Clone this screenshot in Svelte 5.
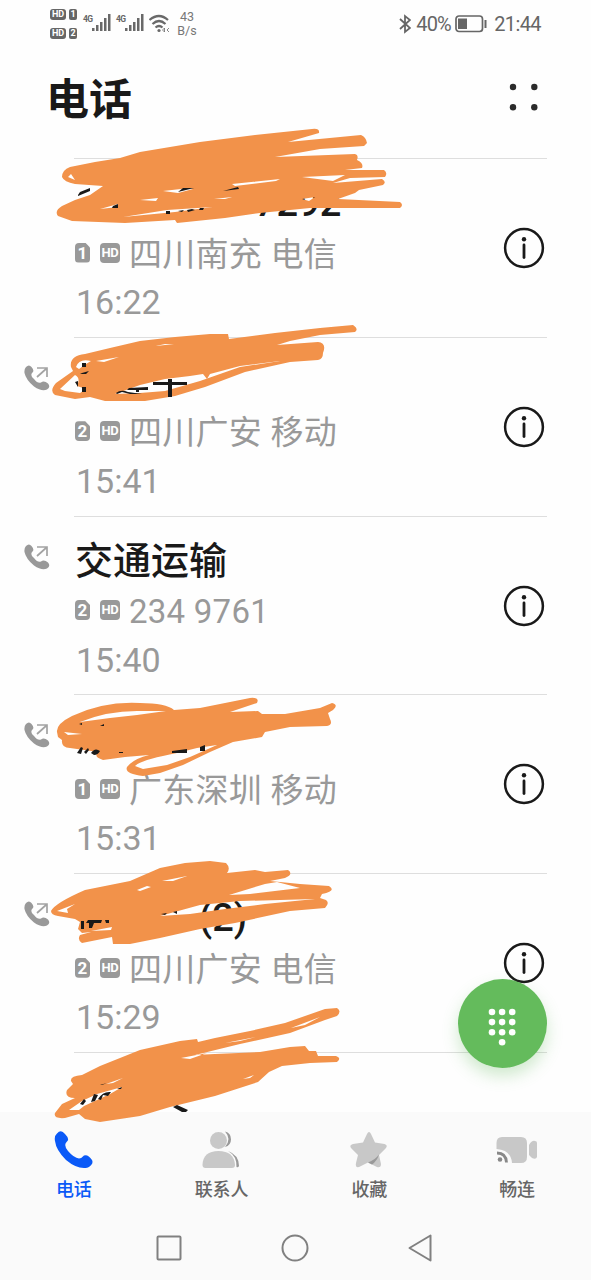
<script>
  const calls = [
    { name: '7292', indent: 180, sim: 1, place: '四川南充 电信', time: '16:22', out: false },
    { name: '', indent: 0, sim: 2, place: '四川广安 移动', time: '15:41', out: true },
    { name: '交通运输', indent: 0, sim: 2, place: '234 9761', time: '15:40', out: true },
    { name: '', indent: 0, sim: 1, place: '广东深圳 移动', time: '15:31', out: true },
    { name: '(2)', indent: 124, sim: 2, place: '四川广安 电信', time: '15:29', out: true }
  ];
  const tabs = [
    { id: 'phone', label: '电话' },
    { id: 'people', label: '联系人' },
    { id: 'star', label: '收藏' },
    { id: 'video', label: '畅连' }
  ];
  const keys = [0, 1, 2, 3, 4, 5, 6, 7, 8, 10];

  // Marker strokes laid over the list, in page coordinates; inner subpaths are gaps.
  const marks = [
    'M62 177Q62 170 70 167L95 162L120 158L140 152L200 142L255 135L312 129Q320 128 319 133L288 142L361 135Q366 137 367 143L364 146L320 149L275 157L355 154Q359 155 357 160Q364 163 362 168L345 170L384 170Q388 173 385 177L350 178L333 183L382 179Q387 182 383 185L359 190L355 193L338 199L400 202Q404 205 400 208L310 208L260 213L225 218L177 223L175 220L125 223L72 221L58 216Q54 211 62 206L75 200L90 195L103 186L75 184Q64 182 62 177Z M68 177L71 174L75 180Z M123 217L167 210L213 207L175 212Z M100 209L118 204L118 207Z M140 200L158 198L156 201Z M163 191L190 188L193 189L178 193Z M232 184L280 179L276 181L235 186Z M302 177L345 175L333 181Z M214 199L232 197L225 199Z M302 199L315 197L309 201Z',
    'M71 367Q69 356 85 354L110 348L140 341L175 337L210 334L228 334L229 339L275 333L320 328L353 325Q359 329 355 332L320 335L290 341L277 345L318 342Q327 343 323 353Q323 359 318 360L290 362L245 372L205 387L175 396L145 401L105 401L90 397L75 399L55 395Q49 391 56 383L73 371Z M60 389L75 375Q81 378 77 386L86 389L80 393L65 391Z M76 367Q79 358 91 361L86 364L79 369Z M96 361L119 357L104 362Z M156 346L174 344L165 344Z M115 394L140 385L165 379L190 376L203 374L207 379L210 374L240 366L280 361L240 367L200 381L165 391L140 393Z',
    'M57 732Q56 724 72 716Q104 701 140 703Q166 703 174 710L200 708L250 698Q260 697 257 703L230 712L258 711L262 714L285 714L320 708L332 703Q339 705 333 710L328 713L330 719Q333 725 327 726L290 727L265 732L262 737L233 742L210 752L183 765L160 773L143 776Q124 774 127 767Q133 759 149 755L125 757L103 760Q93 757 98 752L70 748Q61 748 62 740L58 737Z M80 722Q107 711 137 711L166 711L137 715L110 718Z M64 732L82 734L68 735Z M135 766Q140 760 177 753L197 748L217 745L190 757L167 765L143 769Z',
    'M51 911Q55 903 85 890L130 881L160 868L185 863L210 861L226 863Q231 868 227 873L255 870L265 872L288 870Q294 874 285 878L270 881L300 884L329 886Q337 891 322 894L320 898L326 900Q330 903 325 908L290 911L235 923L200 929L160 938L130 944L113 944L112 937L82 943Q77 940 80 935L91 932L82 933L78 929L80 922L75 919L58 916Q51 915 51 911Z M57 911L75 904L67 909L68 913Z M229 895L265 884L277 882L300 888L250 894Z M137 890L147 886L151 887L140 891Z M162 881L187 876L173 881Z M160 916L200 905L240 901L315 899L265 904L225 909L190 914Z M91 931L112 927L111 930Z',
    'M71 1081Q70 1076 82 1075L100 1066L140 1050L180 1041L197 1039L198 1042L215 1038L250 1031L285 1023L325 1009L337 1008Q342 1011 337 1016L325 1020L290 1033L240 1044L195 1055L215 1054L260 1052L290 1047L305 1046L309 1051L316 1051L318 1056L336 1056Q342 1058 337 1062L310 1063L282 1066L269 1072L258 1082L215 1096L170 1107L140 1116L100 1122L85 1119L79 1114L65 1118Q53 1119 55 1113L62 1104L75 1098Q64 1098 67 1090L73 1084Z M69 1110L82 1101L97 1094L122 1087L110 1094L84 1106L79 1110Z M106 1084L123 1078L113 1083Z M181 1058L207 1053L190 1059Z M225 1043L256 1037L240 1041Z M291 1028L320 1017L305 1025Z M243 1079L254 1075L250 1078Z'
  ];
  const traces =
    'M78 195L80 192L90 188L90 191L78 196Z M178 192L183 188L194 188Z M223 191L238 187L239 189Z M113 206L118 204L118 208L112 208Z M166 211h4v3h-4Z M178 211l6-1l-2 2Z M187 210l5-1l3 1l-7 2Z M200 208h4l-1 2h-4Z M82 363h4v4h-4Z M82 387h4v5h-4Z M82 373l7-2l-3 3h-6Z M75 382l3-1v6Z M153 382h34v3h-34Z M168 379h4v18h-4Z M129 388l19-1v3h-9v2h-3v-2h-9Z M116 393q5-4 12-1l14 2h-12l-8-2l-5 2Z M77 753l4-6l2 1l-2 6Z M84 752l4-4l1 2l-3 4Z M91 753q4-6 9-2q-2 4-6 4Z M172 751l15-2v4h-15Z M200 747l5-2v6h-5Z M119 752h4v1h-4Z M79 724l3-1v2Z M100 726l4-2v2Z M81 921h3v8h-3Z M88 920h14l-1 3h-7l-2 5h-3v-5h-3Z M105 920h4v3h-3Z M161 914l6-1l-2 2Z M173 912l4-1v3Z M80 1104l4-5l2 2l-3 4Z M91 1102l3-8l4 1l-3 6Z M98 1099q5-8 13-7l-3 4l-5-1l-2 5Z M117 1089l5-2l-1 2Z M100 1085l7-2l-5 2Z M173 1107l4-2l11 5l-2 2h-4Z';
</script>

{#snippet bars()}
  <svg class="bars" width="19" height="18" viewBox="0 0 19 18"><path d="M0 14h2.500v3H0zM4 11h2.500v6H4zM8 8h2.500v9H8zM12 4h2.500v13h-2.500zM16 0h2.500v17h-2.500z" fill="#696969" /></svg>
{/snippet}

<main>
  <header class="status">
    <div class="badges">
      {#each [1, 2] as n}
        <div><b class="hd">HD</b><b class="slot">{n}</b></div>
      {/each}
    </div>
    <div class="cell"><span>4G</span>{@render bars()}</div>
    <div class="cell"><span>4G</span>{@render bars()}</div>
    <svg class="wifi" width="24" height="20" viewBox="0 0 24 20" fill="none" stroke="#696969" stroke-width="2.200">
      <path d="M.500 6Q10-2 19 6M3.500 10Q10 4 16.500 10M6.500 13.500Q10 10.500 13.500 13.500" /><circle cx="10" cy="16.500" r="1.600" fill="#696969" stroke="none" /><path d="M13.500 16l2-2v4zM20 14l-2 2l2 2" stroke-width=".8" />
    </svg>
    <div class="rate"><span>43</span><span>B/s</span></div>
    <div class="right">
      <svg width="12" height="20" viewBox="0 0 12 20" fill="none" stroke="#666" stroke-width="1.800"><path d="M1 5l10 9l-5 4V2l5 4L1 15" /></svg>
      <span class="pct">40%</span>
      <svg width="34" height="18" viewBox="0 0 34 18"><rect x="1" y="1" width="26.500" height="15.500" rx="3" fill="none" stroke="#666" stroke-width="1.700" /><path d="M3 3.500h9v10.500h-9z" fill="#666" /><path d="M30.500 5v8" stroke="#666" stroke-width="2" /></svg>
      <span class="clock">21:44</span>
    </div>
  </header>

  <div class="title">
    <h1>电话</h1>
    <svg width="30" height="28" viewBox="0 0 30 28" fill="#2b2b2b"><circle cx="4" cy="4" r="3.200" /><circle cx="25.300" cy="4" r="3.200" /><circle cx="4" cy="24.300" r="3.200" /><circle cx="25.300" cy="24.300" r="3.200" /></svg>
  </div>

  <section class="list">
    {#each calls as c}
      <article>
        <div class="dir">
          {#if c.out}
            <svg width="26" height="26" viewBox="0 0 26 26">
              <path d="M2 2Q5-1 7.500 2Q11 6 8 8Q6 11 10 14Q14 19 17 17.500Q20 15 24 18.500Q27 22 23 24.500Q18 27 10 21.500Q2 15 .500 8Q0 4 2 2Z" fill="#999" />
              <path d="M13 3h10v9M22.500 3.500L13 12" fill="none" stroke="#a3a3a3" stroke-width="1.700" />
            </svg>
          {/if}
        </div>
        <div class="entry">
          <div class="body">
            <div class="name" style:padding-left="{c.indent}px">{c.name}</div>
            <div class="sub"><b class="sim">{c.sim}</b><b class="tag">HD</b><span>{c.place}</span></div>
            <div class="time">{c.time}</div>
          </div>
          <svg class="info" width="42" height="42" viewBox="0 0 42 42"><circle cx="21" cy="21" r="18.900" fill="none" stroke="#191919" stroke-width="2.500" /><circle cx="21" cy="12.200" r="2.200" fill="#191919" /><path d="M21 18v12.500" stroke="#191919" stroke-width="2.800" stroke-linecap="round" /></svg>
        </div>
      </article>
    {/each}
    <div class="rule"></div>
  </section>

  <footer>
    <nav class="tabs">
      {#each tabs as t, i}
        <div class="tab" class:active={i === 0}>
          <svg width="44" height="40" viewBox="0 0 44 40">
            {#if t.id === 'phone'}
              <path d="M5 3.500Q9-1 13 4Q18 9 15 11.500Q11 15 16 21Q22 28 27 28.500Q30 28 32 25.500Q36 24 40 30Q42 34 36 37.500Q26 40 14 30Q4 20 3 11Q2 6 5 3.500Z" fill="#0a59f7" />
            {:else if t.id === 'people'}
              <path d="M25 1.500A8 8 0 0 1 25 17Q32 9 25 1.500ZM28 21Q39 25 39 36Q38 38 36.500 37Q37 26 28 21Z" fill="#999" />
              <circle cx="18.500" cy="10.500" r="8.500" fill="#c8c8c8" /><path d="M2.500 35Q3 21 18.500 21Q34 21 35 35Q35 38 32 38H5.500Q2.500 38 2.500 35Z" fill="#c8c8c8" />
            {:else if t.id === 'star'}
              <path d="M20 4Q22 0 24 4L28 12.500L37.500 14Q41 15 39 18L32 25L34 34Q34 38 30 37L21 32.500L12 37Q8 38 9 33L11 25L4 18Q2 15 6 14L16 12.500Z" fill="#c8c8c8" /><path d="M32 24.500Q28 30 21 32.500L25 34.500Q30 31 32 24.500Z" fill="#999" />
            {:else}
              <path d="M7 7H26Q32 7 32 13V27Q32 33 26 33H17Q16 20 1.500 19V13Q1.500 7 7 7ZM34 15Q37 10 40 11Q42 11 42 13V27Q41 30 37 28L34 25Z" fill="#c8c8c8" />
              <circle cx="5" cy="29.500" r="2.300" fill="#888" /><path d="M2 23Q11 23 11.500 32.500" fill="none" stroke="#888" stroke-width="2.800" />
            {/if}
          </svg>
          <span>{t.label}</span>
        </div>
      {/each}
    </nav>
    <div class="system">
      <svg width="28" height="28" viewBox="0 0 28 28"><rect x="2.500" y="2.500" width="23" height="23" rx="1" /></svg>
      <svg width="28" height="28" viewBox="0 0 28 28"><circle cx="14" cy="14" r="12.500" /></svg>
      <svg width="28" height="28" viewBox="0 0 28 28"><path d="M2.500 14L23.500 1.500V26.500Z" stroke-linejoin="round" /></svg>
    </div>
  </footer>

  <svg class="marker" width="591" height="1280" viewBox="0 0 591 1280">
    {#each marks as d}
      <path {d} fill="#f2924a" fill-rule="evenodd" />
    {/each}
    <path d={traces} fill="#191919" />
  </svg>

  <button class="dial" aria-label="拨号">
    <svg width="30" height="40" viewBox="0 0 30 40" fill="#fff">
      {#each keys as k}<circle cx={5 + (k % 3) * 10.1} cy={5 + Math.floor(k / 3) * 10.1} r="3.300" />{/each}
    </svg>
  </button>
</main>

<style>
  :global(body) { margin: 0; background: #fff; }
  main { position: relative; width: 591px; height: 1280px; overflow: hidden; display: flex; flex-direction: column; background: #fefefe; font-family: Roboto, "Noto Sans CJK SC", sans-serif; color: #191919; }
  svg { display: block; flex: none; }
  .status { height: 48px; flex: none; display: flex; align-items: center; padding: 0 50px; box-sizing: border-box; color: #666; }
  .badges { display: flex; flex-direction: column; gap: 8px; width: 33px; flex: none; }
  .badges div { display: flex; gap: 3px; }
  b { background: #666; color: #fff; text-align: center; flex: none; }
  .hd { width: 16px; height: 11px; font-size: 9px; line-height: 11px; border-radius: 3px; }
  .slot { width: 8px; height: 11px; font-size: 9px; line-height: 11px; border-radius: 2px; }
  .cell { width: 33px; height: 20px; display: flex; flex: none; }
  .cell span { width: 9px; font-size: 8.500px; line-height: 10px; font-weight: 700; letter-spacing: -.6px; }
  .rate { margin-left: 2px; display: flex; flex-direction: column; align-items: center; width: 24px; font-size: 12.500px; line-height: 14.500px; color: #777; flex: none; }
  .right { margin-left: auto; display: flex; align-items: center; font-size: 20px; line-height: 24px; }
  .pct { margin-left: 5px; width: 39px; letter-spacing: -.8px; }
  .clock { margin-left: 5px; letter-spacing: -.6px; }
  .title { height: 110px; flex: none; box-sizing: border-box; padding: 0 52px 12px 46px; display: flex; align-items: center; justify-content: space-between; }
  h1 { margin: 6px 0 0; font-size: 43px; line-height: 60px; font-weight: 700; }
  .list { height: 954px; flex: none; overflow: hidden; }
  article { height: 178.800px; display: flex; }
  .dir { width: 49px; padding: 28px 0 0 24px; box-sizing: border-box; flex: none; }
  .entry { margin-left: 25px; width: 473px; border-top: 1px solid #dedede; box-sizing: border-box; display: flex; justify-content: space-between; }
  .body { padding: 19px 0 0 1px; }
  .name { height: 50px; line-height: 50px; font-size: 38px; font-weight: 500; box-sizing: border-box; white-space: nowrap; }
  .sub { height: 50px; display: flex; align-items: center; font-size: 33px; line-height: 50px; color: #999; white-space: nowrap; }
  .sub b { height: 20px; background: #999; border-radius: 4px; margin-top: -1px; }
  .sim { width: 15px; font-size: 17px; line-height: 20px; clip-path: polygon(0 0, 68% 0, 100% 25%, 100% 100%, 0 100%); }
  .sub .tag { width: 20px; margin-left: 10px; font-size: 13px; line-height: 20px; letter-spacing: -.4px; }
  .sub span { margin: 3px 0 0 9px; letter-spacing: .25px; }
  .time { height: 47px; line-height: 49px; padding-left: 1px; font-size: 34px; color: #999; }
  .info { margin: 68px 2px 0 0; }
  .rule { margin-left: 74px; width: 473px; height: 1px; background: #dedede; }
  footer { height: 168px; flex: none; background: #fafafa; }
  .tabs { display: grid; grid-template-columns: repeat(4, 1fr); height: 104px; }
  .tab { display: flex; flex-direction: column; align-items: center; padding-top: 18px; color: #666; font-size: 18px; line-height: 26px; font-weight: 500; }
  .tab span { margin-top: 7px; }
  .active { color: #0a59f7; }
  .system { display: flex; justify-content: center; gap: 98px; padding: 18px 2px 0 0; }
  .system svg { fill: none; stroke: #808080; stroke-width: 2; }
  .marker { position: absolute; left: 0; top: 0; pointer-events: none; }
  .dial { position: absolute; left: 458px; top: 979px; width: 89px; height: 89px; border: 0; border-radius: 50%; padding: 6px 1px 0 0; display: grid; place-items: center; background: #64bb5c; box-shadow: 0 8px 16px rgba(100, 187, 92, .3); }
</style>
